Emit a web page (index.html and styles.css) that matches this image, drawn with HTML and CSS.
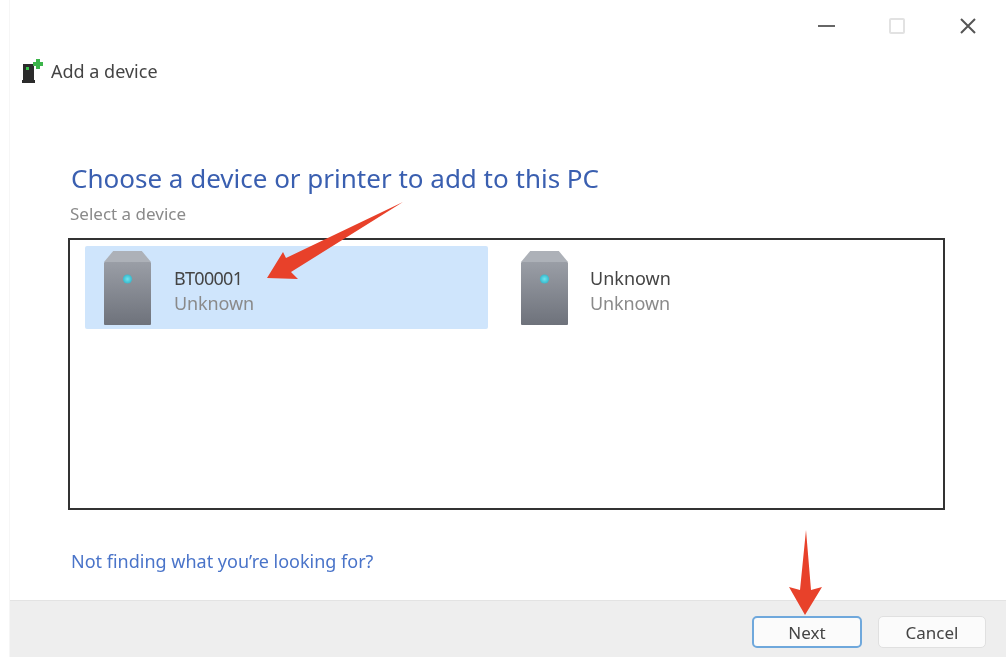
FILE: index.html
```html
<!DOCTYPE html>
<html lang="en">
<head>
<meta charset="utf-8">
<title>Add a device</title>
<link rel="stylesheet" href="styles.css">
</head>
<body>
<div class="window">
  <div class="caption">
    <svg class="cap-icon" width="17" height="12" viewBox="0 0 17 12"><path class="min" d="M0 6h17"/></svg>
    <svg class="cap-icon" width="16" height="16" viewBox="0 0 16 16"><rect class="max" x="1" y="1" width="14" height="14" rx="1"/></svg>
    <svg class="cap-icon" width="18" height="18" viewBox="0 0 18 18"><path class="close" d="M2 2l14 14M16 2L2 16"/></svg>
  </div>
  <div class="app-title">
    <svg class="app-icon" width="22" height="27" viewBox="0 0 22 27">
      <path fill="#2b2b2b" d="M1 6h11v18H1z"/>
      <path fill="#2b2b2b" d="M0 22h13v3H0z"/>
      <rect x="4" y="9" width="3" height="3" fill="#35c44a"/>
      <path class="plus" d="M16 1v10M11 6h10"/>
    </svg>
    <span>Add a device</span>
  </div>
  <main class="content">
    <h1 class="heading">Choose a device or printer to add to this PC</h1>
    <p class="sub">Select a device</p>
    <div class="list">
      <div class="device selected">
        <svg class="tower" width="47" height="74" viewBox="0 0 46 74" preserveAspectRatio="none"><use href="#tower-art"/></svg>
        <div class="meta"><div class="name serial">BT00001</div><div class="kind">Unknown</div></div>
      </div>
      <div class="device">
        <svg class="tower" width="47" height="74" viewBox="0 0 46 74" preserveAspectRatio="none"><use href="#tower-art"/></svg>
        <div class="meta"><div class="name">Unknown</div><div class="kind">Unknown</div></div>
      </div>
    </div>
    <a class="help" href="#">Not finding what you’re looking for?</a>
  </main>
  <footer class="footer">
    <button class="btn primary">Next</button>
    <button class="btn secondary">Cancel</button>
  </footer>
</div>

<svg class="defs" width="0" height="0">
  <defs>
    <linearGradient id="body-grad" x1="0" y1="0" x2="0" y2="1">
      <stop offset="0" stop-color="#9a9ea6"/>
      <stop offset="1" stop-color="#6e727b"/>
    </linearGradient>
    <radialGradient id="led-grad">
      <stop offset="0" stop-color="#6fe6f0"/>
      <stop offset="1" stop-color="#39b9cc"/>
    </radialGradient>
    <g id="tower-art">
      <path fill="#adb1b8" d="M9 0h28l9 11H0z"/>
      <rect y="11" width="46" height="63" rx="1" fill="url(#body-grad)"/>
      <circle cx="23" cy="28" r="4.5" fill="url(#led-grad)"/>
    </g>
  </defs>
</svg>

<svg class="annot annot-one" width="146" height="84" viewBox="0 0 146 84">
  <path fill="#e8412a" d="M143 4L26 60 23 54 7 80 38 81 31 74z"/>
</svg>
<svg class="annot annot-two" width="41" height="90" viewBox="0 0 41 90">
  <path fill="#e8412a" d="M21 2L26 62 37 59 20 87 4 59 15 62z"/>
</svg>
</body>
</html>
```

FILE: styles.css
```css
* { box-sizing: border-box; }
html, body { margin: 0; height: 100%; background: #fff; }
body { width: 1006px; height: 658px; overflow: hidden; position: relative; font-family: "Noto Sans", "Open Sans", sans-serif; }
.window {
  margin-left: 9px;
  height: 657px;
  display: flex;
  flex-direction: column;
  border-left: 1px solid #f6f6f6;
  filter: blur(0.6px);
}
.caption {
  display: flex;
  align-items: center;
  justify-content: flex-end;
  height: 52px;
  gap: 54px;
  padding-right: 29px;
  flex: none;
}
.cap-icon { display: block; flex: none; }
.min { stroke: #666; stroke-width: 2; fill: none; }
.max { stroke: #e2e2e2; stroke-width: 2; fill: none; }
.close { stroke: #555; stroke-width: 2; fill: none; }
.app-title {
  display: flex;
  align-items: center;
  gap: 7px;
  height: 40px;
  padding-left: 12px;
  flex: none;
  margin-top: -1px;
  font-size: 18px;
  color: #444;
}
.plus { stroke: #3cb54a; stroke-width: 4; fill: none; }
.content { flex: 1; padding: 70px 61px 0 58px; display: flex; flex-direction: column; min-height: 0; }
.heading { margin: 0 0 0 3px; font-size: 26px; line-height: 34px; font-weight: 400; color: #3a5fb0; white-space: nowrap; }
.sub { margin: 9px 0 0 2px; font-size: 17px; line-height: 20px; color: #8a8a8a; }
.list {
  margin-top: 14px;
  height: 272px;
  border: 2px solid #333;
  padding: 6px 15px;
  display: flex;
  align-items: flex-start;
}
.device { width: 403px; height: 83px; display: flex; align-items: center; gap: 23px; padding-left: 19px; border-radius: 2px; }
.device + .device { padding-left: 33px; gap: 22px; }
.selected { background: #cfe5fc; }
.tower { flex: none; display: block; }
.meta { font-size: 18px; line-height: 25px; margin-top: 6px; }
.name { color: #444; }
.serial { letter-spacing: -0.7px; }
.kind { color: #8a8a8a; letter-spacing: -0.1px; }
.help { display: block; margin: 39px 0 0 3px; font-size: 18px; line-height: 24px; color: #4a74c9; text-decoration: none; }
.footer {
  flex: none;
  height: 57px;
  background: #eeeeee;
  border-top: 1px solid #e3e3e3;
  display: flex;
  justify-content: flex-end;
  align-items: center;
  gap: 16px;
  padding: 6px 20px 0 0;
}
.btn {
  height: 32px;
  font: inherit;
  font-size: 17px;
  color: #444;
  background: #fbfbfb;
  border: 1px solid #e0e0e0;
  border-radius: 5px;
}
.primary { width: 110px; border: 2px solid #6fa8dc; }
.secondary { width: 108px; }
.defs { position: absolute; }
.annot { position: absolute; filter: blur(0.4px); }
.annot-one { left: 260px; top: 198px; }
.annot-two { left: 785px; top: 528px; }
```
